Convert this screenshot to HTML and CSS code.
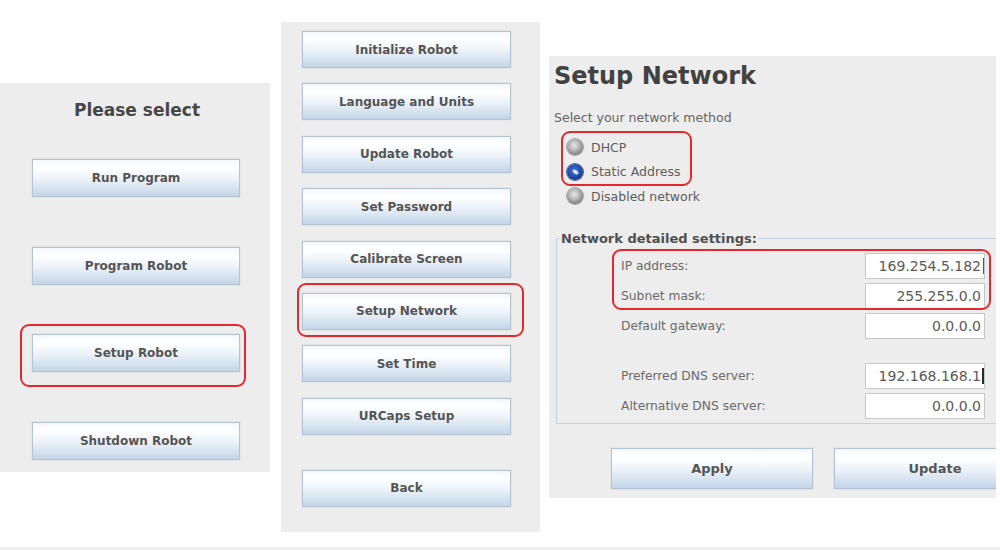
FILE: index.html
```html
<!DOCTYPE html>
<html lang="en">
<head>
<meta charset="utf-8">
<title>Robot setup</title>
<link rel="stylesheet" href="styles.css">
</head>
<body>
<div class="stage">
  <section class="panel panel-main">
    <h2 class="panel-title">Please select</h2>
    <div class="main-list">
      <button class="btn btn-main">Run Program</button>
      <button class="btn btn-main">Program Robot</button>
      <button class="btn btn-main">Setup Robot</button>
      <button class="btn btn-main">Shutdown Robot</button>
    </div>
    <div class="mark mark-main"></div>
  </section>

  <section class="panel panel-setup">
    <div class="setup-list">
      <button class="btn btn-setup">Initialize Robot</button>
      <button class="btn btn-setup">Language and Units</button>
      <button class="btn btn-setup">Update Robot</button>
      <button class="btn btn-setup">Set Password</button>
      <button class="btn btn-setup">Calibrate Screen</button>
      <button class="btn btn-setup">Setup Network</button>
      <button class="btn btn-setup">Set Time</button>
      <button class="btn btn-setup">URCaps Setup</button>
      <button class="btn btn-setup btn-back">Back</button>
    </div>
    <div class="mark mark-setup"></div>
  </section>

  <section class="panel panel-network">
    <h1 class="net-title">Setup Network</h1>
    <p class="net-hint">Select your network method</p>
    <div class="radio-group">
      <div class="radio-row"><span class="radio"></span>DHCP</div>
      <div class="radio-row"><span class="radio radio-on"></span>Static Address</div>
      <div class="radio-row"><span class="radio"></span>Disabled network</div>
    </div>
    <fieldset class="net-box">
      <legend class="net-legend">Network detailed settings:</legend>
      <div class="net-group">
        <div class="net-row"><span class="net-label">IP address:</span><span class="field field-caret-thin">169.254.5.182</span></div>
        <div class="net-row"><span class="net-label">Subnet mask:</span><span class="field">255.255.0.0</span></div>
        <div class="net-row"><span class="net-label">Default gateway:</span><span class="field">0.0.0.0</span></div>
      </div>
      <div class="net-group net-group-dns">
        <div class="net-row"><span class="net-label">Preferred DNS server:</span><span class="field field-caret">192.168.168.1</span></div>
        <div class="net-row"><span class="net-label">Alternative DNS server:</span><span class="field">0.0.0.0</span></div>
      </div>
    </fieldset>
    <div class="net-actions">
      <button class="btn btn-wide">Apply</button>
      <button class="btn btn-wide">Update</button>
    </div>
    <div class="mark mark-radio"></div>
    <div class="mark mark-ip"></div>
  </section>
</div>
<div class="baseline"></div>
</body>
</html>
```

FILE: styles.css
```css
* { box-sizing: border-box; }

html, body {
  margin: 0;
  background: #ffffff;
}

body {
  width: 1000px;
  height: 550px;
  overflow: hidden;
  font-family: "DejaVu Sans", "Liberation Sans", sans-serif;
  color: #444;
}

.stage {
  display: flex;
  align-items: flex-start;
  height: 547px;
  overflow: hidden;
}

.baseline {
  height: 3px;
  background: #efefef;
}

.panel {
  position: relative;
  flex-shrink: 0;
  background: #ededed;
}

/* generic Swing-like button */
.btn {
  display: flex;
  align-items: center;
  justify-content: center;
  margin: 0;
  padding: 0;
  border: 1px solid #b3c3d4;
  border-radius: 0;
  background: linear-gradient(to bottom, #f4f7fb 0%, #ffffff 22%, #eaf1f8 55%, #c4d5e8 100%);
  box-shadow: 0 0 1px rgba(90, 110, 130, 0.35);
  font-family: "DejaVu Sans", "Liberation Sans", sans-serif;
  font-size: 12px;
  font-weight: bold;
  color: #555;
  flex-shrink: 0;
}

/* left panel */
.panel-main {
  margin-top: 83px;
  width: 270px;
  height: 389px;
  padding: 17px 0 0 32px;
}

.panel-title {
  width: 210px;
  margin: 0;
  font-size: 17px;
  line-height: 20px;
  font-weight: bold;
  text-align: center;
  color: #474747;
}

.main-list {
  display: flex;
  flex-direction: column;
  gap: 49.5px;
  margin-top: 39px;
}

.btn-main {
  width: 208px;
  height: 38px;
}

/* middle panel */
.panel-setup {
  margin-left: 11px;
  margin-top: 22px;
  width: 259px;
  height: 510px;
  padding: 9px 0 0 21px;
}

.setup-list {
  display: flex;
  flex-direction: column;
  gap: 15.4px;
}

.btn-setup {
  width: 209px;
  height: 37px;
}

.btn-back {
  margin-top: 19.6px;
}

/* right panel */
.panel-network {
  margin-left: 9px;
  margin-top: 56px;
  width: 447px;
  height: 442px;
  padding: 6px 0 0 5px;
  overflow: hidden;
}

.net-title {
  margin: 0;
  font-size: 24px;
  line-height: 28px;
  font-weight: bold;
  color: #424242;
}

.net-hint {
  margin: 20px 0 0;
  font-size: 12.5px;
  line-height: 16px;
  color: #666;
}

.radio-group {
  margin-top: 9px;
  padding-left: 13px;
}

.radio-row {
  display: flex;
  align-items: center;
  gap: 8px;
  height: 24.5px;
  font-size: 12.5px;
  color: #5e5e5e;
}

.radio {
  position: relative;
  width: 16px;
  height: 16px;
  border-radius: 50%;
  flex-shrink: 0;
  background: radial-gradient(circle at 45% 40%, #e6e6e6 0%, #bdbdbd 35%, #858585 70%, #555 100%);
  box-shadow: 0 0 0 1px rgba(70, 70, 70, 0.45);
}

.radio-on {
  background: radial-gradient(circle at 45% 40%, #3f6fd6 0%, #2450b0 45%, #143680 78%, #0b1f4e 100%);
  box-shadow: 0 0 0 1px rgba(20, 35, 80, 0.7);
}

.radio-on::after {
  content: "";
  position: absolute;
  left: 5px;
  top: 6px;
  width: 7px;
  height: 4px;
  border-radius: 50%;
  background: radial-gradient(ellipse at center, #f2f6ff 0%, #c9dbff 55%, rgba(160, 190, 255, 0) 100%);
  transform: rotate(35deg);
}

.net-box {
  margin: 22px -20px 0 2px;
  padding: 6px 0 4px;
  min-width: 0;
  border: 1px solid #c6d3df;
}

.net-legend {
  margin-left: 3px;
  padding: 0 1px;
  font-size: 13px;
  line-height: 16px;
  font-weight: bold;
  color: #505050;
}

.net-group {
  display: flex;
  flex-direction: column;
  gap: 4px;
}

.net-group-dns {
  margin-top: 24px;
}

.net-row {
  display: grid;
  grid-template-columns: 244px 120px;
  align-items: center;
  height: 26px;
  padding-left: 64px;
}

.net-label {
  font-size: 12.3px;
  color: #6b6b6b;
}

.field {
  position: relative;
  display: block;
  height: 26px;
  padding-right: 3px;
  border: 1px solid #c6c6c6;
  background: #ffffff;
  font-size: 14px;
  line-height: 24px;
  text-align: right;
  color: #5a5a5a;
}

.field-caret::after,
.field-caret-thin::after {
  content: "";
  position: absolute;
  right: 0;
  top: 4px;
  bottom: 4px;
  width: 2px;
  background: #2a2a2a;
}

.field-caret-thin::after {
  width: 1px;
  background: #555;
}

.net-actions {
  display: flex;
  gap: 21px;
  margin-top: 24px;
  padding-left: 57px;
}

.btn-wide {
  width: 202px;
  height: 41px;
  font-size: 13px;
}

/* red annotation frames */
.mark {
  position: absolute;
  border: 2px solid #e5282d;
  border-radius: 9px;
  pointer-events: none;
}

.mark-main  { left: 20px; top: 241px; width: 226px; height: 63px; }
.mark-setup { left: 16px; top: 261px; width: 227px; height: 54px; }
.mark-radio { left: 12px; top: 75px;  width: 131px; height: 55px; }
.mark-ip    { left: 63px; top: 193px; width: 379px; height: 61px; }
```
